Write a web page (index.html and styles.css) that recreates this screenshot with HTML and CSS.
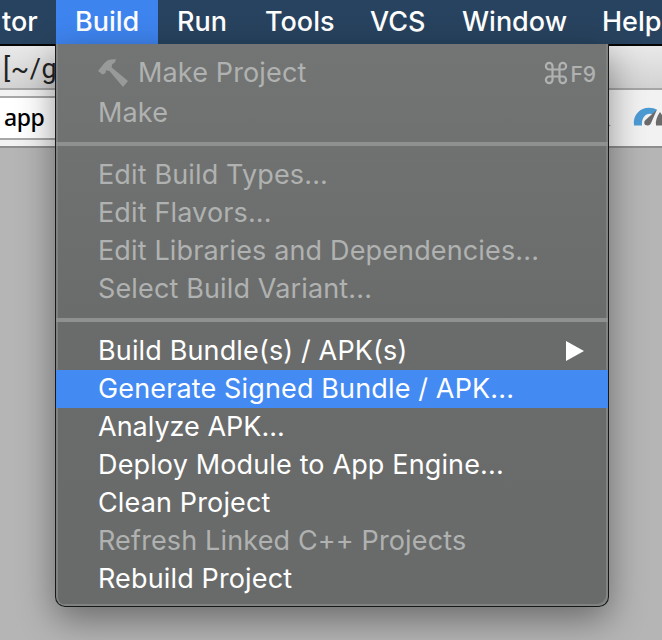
FILE: index.html
```html
<!DOCTYPE html>
<html lang="en">
<head>
<meta charset="utf-8">
<title>Build menu</title>
<link rel="stylesheet" href="styles.css">
</head>
<body>
<nav class="menubar">
  <span class="tab refactor">tor</span>
  <span class="tab build active">Build</span>
  <span class="tab run">Run</span>
  <span class="tab tools">Tools</span>
  <span class="tab vcs">VCS</span>
  <span class="tab window">Window</span>
  <span class="tab help">Help</span>
</nav>
<main class="ide">
  <header class="titlebar">[~/g</header>
  <div class="toolbar">
    <div class="config">app</div>
    <svg class="tools-icon" width="56" height="32" viewBox="0 0 56 32">
      <path d="M0 16l5 2.500-5 2.500z" fill="#aaa"/>
      <path d="M28 18.500C26.500 8 34 .7 43 .7c3.500 0 6 .8 8 2l-4 4.600c-6-2.400-12 2.600-11 11.200z" fill="#4b9bd3"/>
      <path d="M51 2.500L45.500 15c-.8 2-1.500 3.500-4 3.500-3.300 0-4-3-2.500-5z" fill="#6b6b6b"/>
      <path d="M54 5l2 3v10.500h-6c-.8-4 .8-9 4-13.500z" fill="#6b6b6b"/>
    </svg>
  </div>
</main>
<div class="menu">
  <div class="item first disabled">
    <svg class="hammer" width="34" height="32" viewBox="0 0 34 32">
      <path d="M0 14L6 6.500C9 2.500 13 2 18 2.300l-1 3-3 2.200-.3 3L30 24 25 30 11.500 14 8 13.300 7.500 16 4.500 17.500z" fill="#989a99"/>
    </svg>
    <span class="label">Make Project</span>
    <span class="shortcut">
      <svg width="24" height="24" viewBox="0 0 24 24"><path d="M8.500 8.500H5.200A3.300 3.300 0 1 1 8.500 5.200V18.800A3.300 3.300 0 1 1 5.200 15.500H18.800A3.300 3.300 0 1 1 15.500 18.800V5.200A3.300 3.300 0 1 1 18.800 8.500H8" fill="none" stroke="#b0b2b1" stroke-width="2.200"/></svg>
      <span class="key">F9</span>
    </span>
  </div>
  <div class="item disabled"><span class="label">Make</span></div>
  <div class="separator"></div>
  <div class="item disabled"><span class="label">Edit Build Types...</span></div>
  <div class="item disabled"><span class="label">Edit Flavors...</span></div>
  <div class="item disabled"><span class="label">Edit Libraries and Dependencies...</span></div>
  <div class="item disabled"><span class="label">Select Build Variant...</span></div>
  <div class="separator"></div>
  <div class="item"><span class="label">Build Bundle(s) / APK(s)</span>
    <svg class="arrow" width="18" height="20" viewBox="0 0 18 20"><path d="M0 0l18 10L0 20z" fill="#fff"/></svg>
  </div>
  <div class="item selected"><span class="label">Generate Signed Bundle / APK...</span></div>
  <div class="item"><span class="label tight">Analyze APK...</span></div>
  <div class="item"><span class="label">Deploy Module to App Engine...</span></div>
  <div class="item"><span class="label">Clean Project</span></div>
  <div class="item disabled"><span class="label">Refresh Linked C++ Projects</span></div>
  <div class="item"><span class="label">Rebuild Project</span></div>
</div>
</body>
</html>
```
FILE: styles.css
```css
* { box-sizing: border-box; }
body {
  margin: 0;
  width: 662px;
  height: 640px;
  overflow: hidden;
  position: relative;
  background: #b5b5b5;
  font: 27px/38px Inter, sans-serif;
  white-space: nowrap;
}
.menubar {
  display: flex;
  height: 44px;
  background: #28435f;
  color: #fff;
  line-height: 44px;
  font-weight: 450;
}
.tab { flex: none; padding-left: 19px; }
.refactor { width: 56px; padding-left: 2px; }
.build { width: 102px; }
.run { width: 88px; }
.tools { width: 105px; }
.vcs { width: 92px; }
.window { width: 139px; }
.help { padding-left: 20px; }
.active { background: #3e84ef; }
.titlebar {
  height: 46px;
  border-top: 2px solid #050505;
  border-bottom: 2px solid #a6a6a6;
  background: linear-gradient(#e9e9e9, #d2d2d2);
  color: #222;
  font: 27px/47px Roboto, sans-serif;
  letter-spacing: .6px;
  padding-left: 3px;
}
.toolbar {
  display: flex;
  justify-content: space-between;
  height: 58px;
  background: #f2f2f2;
  border-bottom: 2px solid #8e8e8e;
}
.config {
  width: 56px;
  height: 44px;
  margin-top: 6px;
  padding-left: 4px;
  border: solid #a8a8a8;
  border-width: 2px 0;
  background: #fff;
  color: #000;
  font: 500 23px/39px "Noto Sans", sans-serif;
  letter-spacing: -.5px;
}
.tools-icon { margin-top: 17px; }
.menu {
  position: absolute;
  left: 55px;
  top: 44px;
  width: 554px;
  height: 563px;
  padding-top: 8px;
  border: 1px solid #161819;
  border-top: 0;
  border-radius: 0 0 10px 10px;
  background: linear-gradient(#737574, #6a6c6b 50%, #696b6a);
  box-shadow: inset 2px 0 #808281, inset -2px -2px #808281, 0 12px 36px rgba(0, 0, 0, .42);
  color: #fff;
}
.item {
  display: flex;
  align-items: center;
  height: 38px;
  padding-left: 42px;
}
.label { letter-spacing: .14px; }
.tight { letter-spacing: 0; }
.first { height: 42px; }
.disabled { color: #b0b2b1; }
.selected { background: #448af3; }
.hammer { margin-right: 6px; }
.shortcut {
  display: flex;
  align-items: center;
  gap: 2px;
  margin: 0 12px 0 auto;
  font-size: 21px;
  font-weight: 500;
}
.key { padding-top: 3px; }
.arrow { margin: 0 24px 0 auto; }
.separator {
  height: 24px;
  border: solid transparent;
  border-width: 10px 0;
  background: #8f9190 padding-box;
}
```
